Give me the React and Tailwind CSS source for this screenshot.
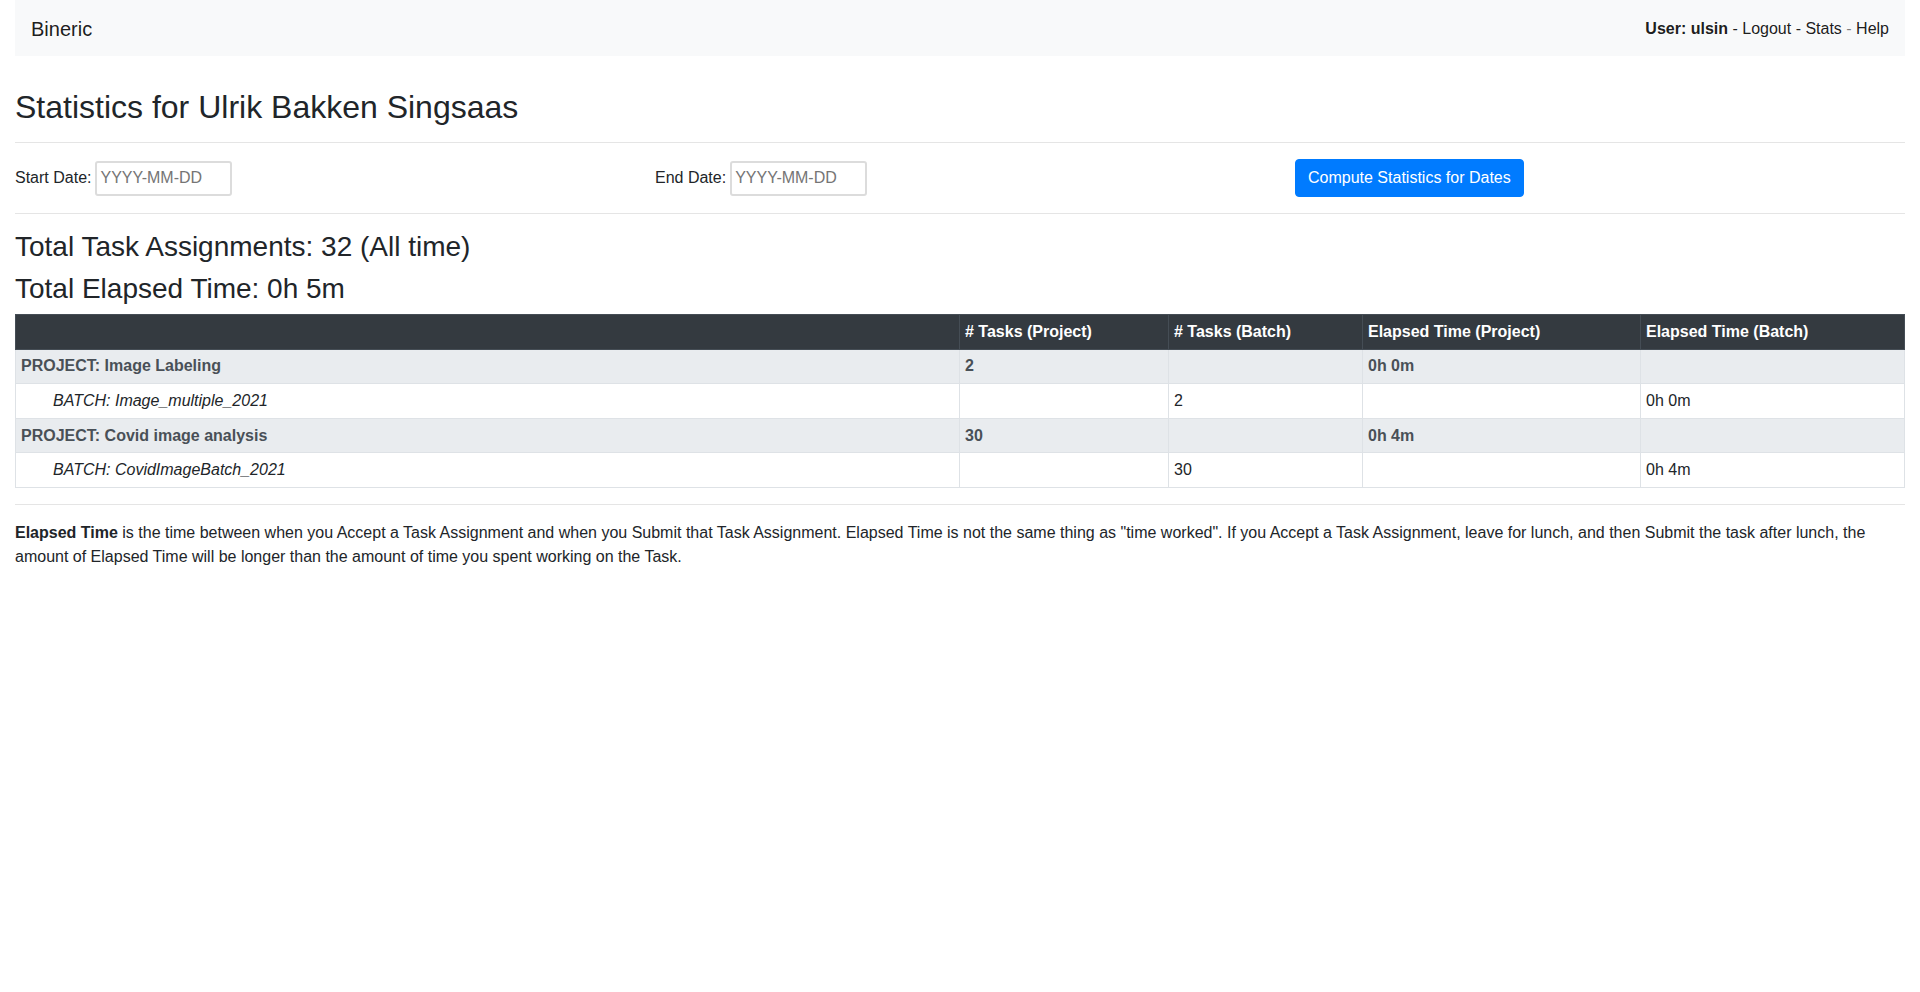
export default function App() {
  const font = { fontFamily: '"Liberation Sans", Arial, sans-serif' };
  const rows = [
    { type: "project", name: "PROJECT: Image Labeling", tp: "2", tb: "", ep: "0h 0m", eb: "" },
    { type: "batch", name: "BATCH: Image_multiple_2021", tp: "", tb: "2", ep: "", eb: "0h 0m" },
    { type: "project", name: "PROJECT: Covid image analysis", tp: "30", tb: "", ep: "0h 4m", eb: "" },
    { type: "batch", name: "BATCH: CovidImageBatch_2021", tp: "", tb: "30", ep: "", eb: "0h 4m" },
  ];
  return (
    <div className="min-h-[992px] bg-white text-[#212529] text-base leading-6 px-[15px]" style={font}>
      <nav className="h-[56px] bg-[#f8f9fa] flex items-center justify-between px-4 pt-[1px]">
        <span className="text-[20px] leading-[30px] text-[rgba(0,0,0,0.9)]">Bineric</span>
        <span className="text-[16px] text-[rgba(0,0,0,0.9)]">
          <b>User: ulsin</b> - Logout - Stats <span className="text-[rgba(0,0,0,0.5)]">-</span> Help
        </span>
      </nav>
      <h2 className="mt-[32px] text-[32px] leading-[38.4px] font-normal">Statistics for Ulrik Bakken Singsaas</h2>
      <hr className="mt-4 mb-4 border-t border-[rgba(0,0,0,0.1)]" />
      <div className="grid grid-cols-[640px_640px_1fr] items-center h-[38px]">
        <div className="flex items-center">
          <span>Start Date:</span>
          <input
            placeholder="YYYY-MM-DD"
            className="ml-[4px] w-[137px] h-[35px] border-2 border-[#dcdcdc] rounded-[3px] px-[3px] text-base placeholder:text-[#757575] outline-none"
            style={font}
          />
        </div>
        <div className="flex items-center">
          <span>End Date:</span>
          <input
            placeholder="YYYY-MM-DD"
            className="ml-[4px] w-[137px] h-[35px] border-2 border-[#dcdcdc] rounded-[3px] px-[3px] text-base placeholder:text-[#757575] outline-none"
            style={font}
          />
        </div>
        <div className="flex items-center">
          <button className="bg-[#007bff] border border-[#007bff] text-white rounded-[4px] px-3 py-[6px] leading-6 text-base" style={font}>
            Compute Statistics for Dates
          </button>
        </div>
      </div>
      <hr className="mt-4 mb-4 border-t border-[rgba(0,0,0,0.1)]" />
      <h3 className="text-[28px] leading-[33.6px] mb-2 font-normal">Total Task Assignments: 32 (All time)</h3>
      <h3 className="text-[28px] leading-[33.6px] mb-2 font-normal">Total Elapsed Time: 0h 5m</h3>
      <table className="w-full table-fixed border-collapse mb-4">
        <colgroup>
          <col />
          <col className="w-[209px]" />
          <col className="w-[194px]" />
          <col className="w-[278px]" />
          <col className="w-[264px]" />
        </colgroup>
        <thead>
          <tr className="bg-[#343a40] text-white">
            {["", "# Tasks (Project)", "# Tasks (Batch)", "Elapsed Time (Project)", "Elapsed Time (Batch)"].map((h, i) => (
              <th key={i} className="border border-[#454d55] px-[5px] py-[4.8px] text-left font-bold h-[35px] leading-6">
                {h}
              </th>
            ))}
          </tr>
        </thead>
        <tbody>
          {rows.map((r, i) =>
            r.type === "project" ? (
              <tr key={i} className="bg-[#e9ecef] text-[#495057] font-bold">
                <td className="border border-[#dee2e6] px-[5px] py-[4.8px] leading-6">{r.name}</td>
                <td className="border border-[#dee2e6] px-[5px] py-[4.8px] leading-6">{r.tp}</td>
                <td className="border border-[#dee2e6] px-[5px] py-[4.8px] leading-6">{r.tb}</td>
                <td className="border border-[#dee2e6] px-[5px] py-[4.8px] leading-6">{r.ep}</td>
                <td className="border border-[#dee2e6] px-[5px] py-[4.8px] leading-6">{r.eb}</td>
              </tr>
            ) : (
              <tr key={i}>
                <td className="border border-[#dee2e6] pl-[37px] pr-[5px] py-[4.8px] leading-6 italic">{r.name}</td>
                <td className="border border-[#dee2e6] px-[5px] py-[4.8px] leading-6">{r.tp}</td>
                <td className="border border-[#dee2e6] px-[5px] py-[4.8px] leading-6">{r.tb}</td>
                <td className="border border-[#dee2e6] px-[5px] py-[4.8px] leading-6">{r.ep}</td>
                <td className="border border-[#dee2e6] px-[5px] py-[4.8px] leading-6">{r.eb}</td>
              </tr>
            )
          )}
        </tbody>
      </table>
      <hr className="mt-4 mb-4 border-t border-[rgba(0,0,0,0.1)]" />
      <p>
        <b>Elapsed Time</b> is the time between when you Accept a Task Assignment and when you Submit that Task
        Assignment. Elapsed Time is not the same thing as "time worked". If you Accept a Task Assignment, leave for
        lunch, and then Submit the task after lunch, the amount of Elapsed Time will be longer than the amount of time
        you spent working on the Task.
      </p>
    </div>
  );
}
